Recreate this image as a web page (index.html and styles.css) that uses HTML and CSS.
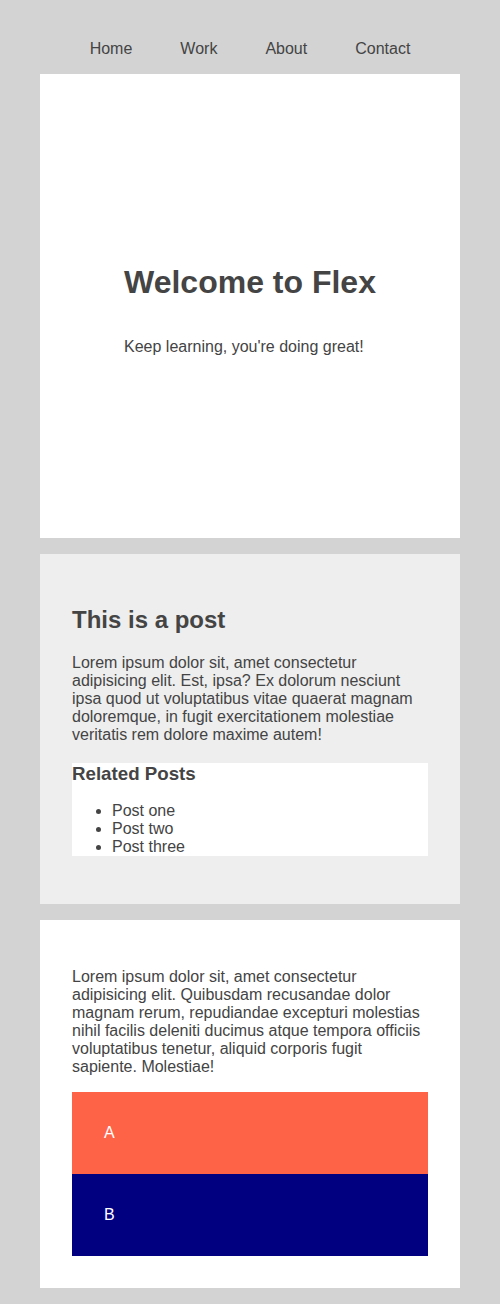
FILE: index.html
```html
<!DOCTYPE html>
<html lang="en">
<head>
<meta charset="utf-8">
<title>Welcome to Flex</title>
<link rel="stylesheet" href="styles.css">
</head>
<body>
<nav class="nav">
  <ul class="nav-list">
    <li><a href="#">Home</a></li>
    <li><a href="#">Work</a></li>
    <li><a href="#">About</a></li>
    <li><a href="#">Contact</a></li>
  </ul>
</nav>
<main class="container">
  <section class="hero">
    <div class="hero-inner">
      <h1>Welcome to Flex</h1>
      <p>Keep learning, you're doing great!</p>
    </div>
  </section>
  <section class="post">
    <h2>This is a post</h2>
    <p>Lorem ipsum dolor sit, amet consectetur adipisicing elit. Est, ipsa? Ex dolorum nesciunt ipsa quod ut voluptatibus vitae quaerat magnam doloremque, in fugit exercitationem molestiae veritatis rem dolore maxime autem!</p>
    <aside class="related">
      <h3>Related Posts</h3>
      <ul>
        <li>Post one</li>
        <li>Post two</li>
        <li>Post three</li>
      </ul>
    </aside>
  </section>
  <section class="content">
    <p>Lorem ipsum dolor sit, amet consectetur adipisicing elit. Quibusdam recusandae dolor magnam rerum, repudiandae excepturi molestias nihil facilis deleniti ducimus atque tempora officiis voluptatibus tenetur, aliquid corporis fugit sapiente. Molestiae!</p>
    <div class="boxes">
      <div class="box box-a">A</div>
      <div class="box box-b">B</div>
    </div>
  </section>
</main>
</body>
</html>
```
FILE: styles.css
```css
* {
  box-sizing: border-box;
}

body {
  margin: 0;
  background: #d3d3d3;
  color: #444;
  font-family: "Liberation Sans", Arial, Helvetica, sans-serif;
  font-size: 16px;
}

.nav-list {
  list-style: none;
  margin: 0;
  padding: 40px 0 16px;
  display: flex;
  justify-content: center;
  gap: 48px;
}

.nav-list a {
  color: #444;
  text-decoration: none;
}

.container {
  margin: 0 40px;
  padding-bottom: 16px;
  display: flex;
  flex-direction: column;
  gap: 16px;
}

.hero {
  background: #fff;
  height: 464px;
  display: flex;
  align-items: center;
  justify-content: center;
}

.hero-inner {
  display: flex;
  flex-direction: column;
  padding-top: 2px;
}

.hero-inner h1 {
  font-size: 32px;
  margin: 21.44px 0;
}

.hero-inner p {
  margin: 16px 0;
}

.post {
  background: #eee;
  padding: 32px;
}

.post h2 {
  font-size: 24px;
  margin: 19.92px 0;
}

.post p {
  margin: 16px 0 19px;
}

.related {
  background: #fff;
  margin-bottom: 16px;
}

.related h3 {
  font-size: 18.72px;
  margin: 0;
}

.related ul {
  margin: 17px 0 0;
  padding-left: 40px;
}

.content {
  background: #fff;
  padding: 32px;
}

.content p {
  margin: 16px 0;
}

.box {
  padding: 32px;
  color: #fff;
}

.box-a {
  background: tomato;
}

.box-b {
  background: navy;
}
```
